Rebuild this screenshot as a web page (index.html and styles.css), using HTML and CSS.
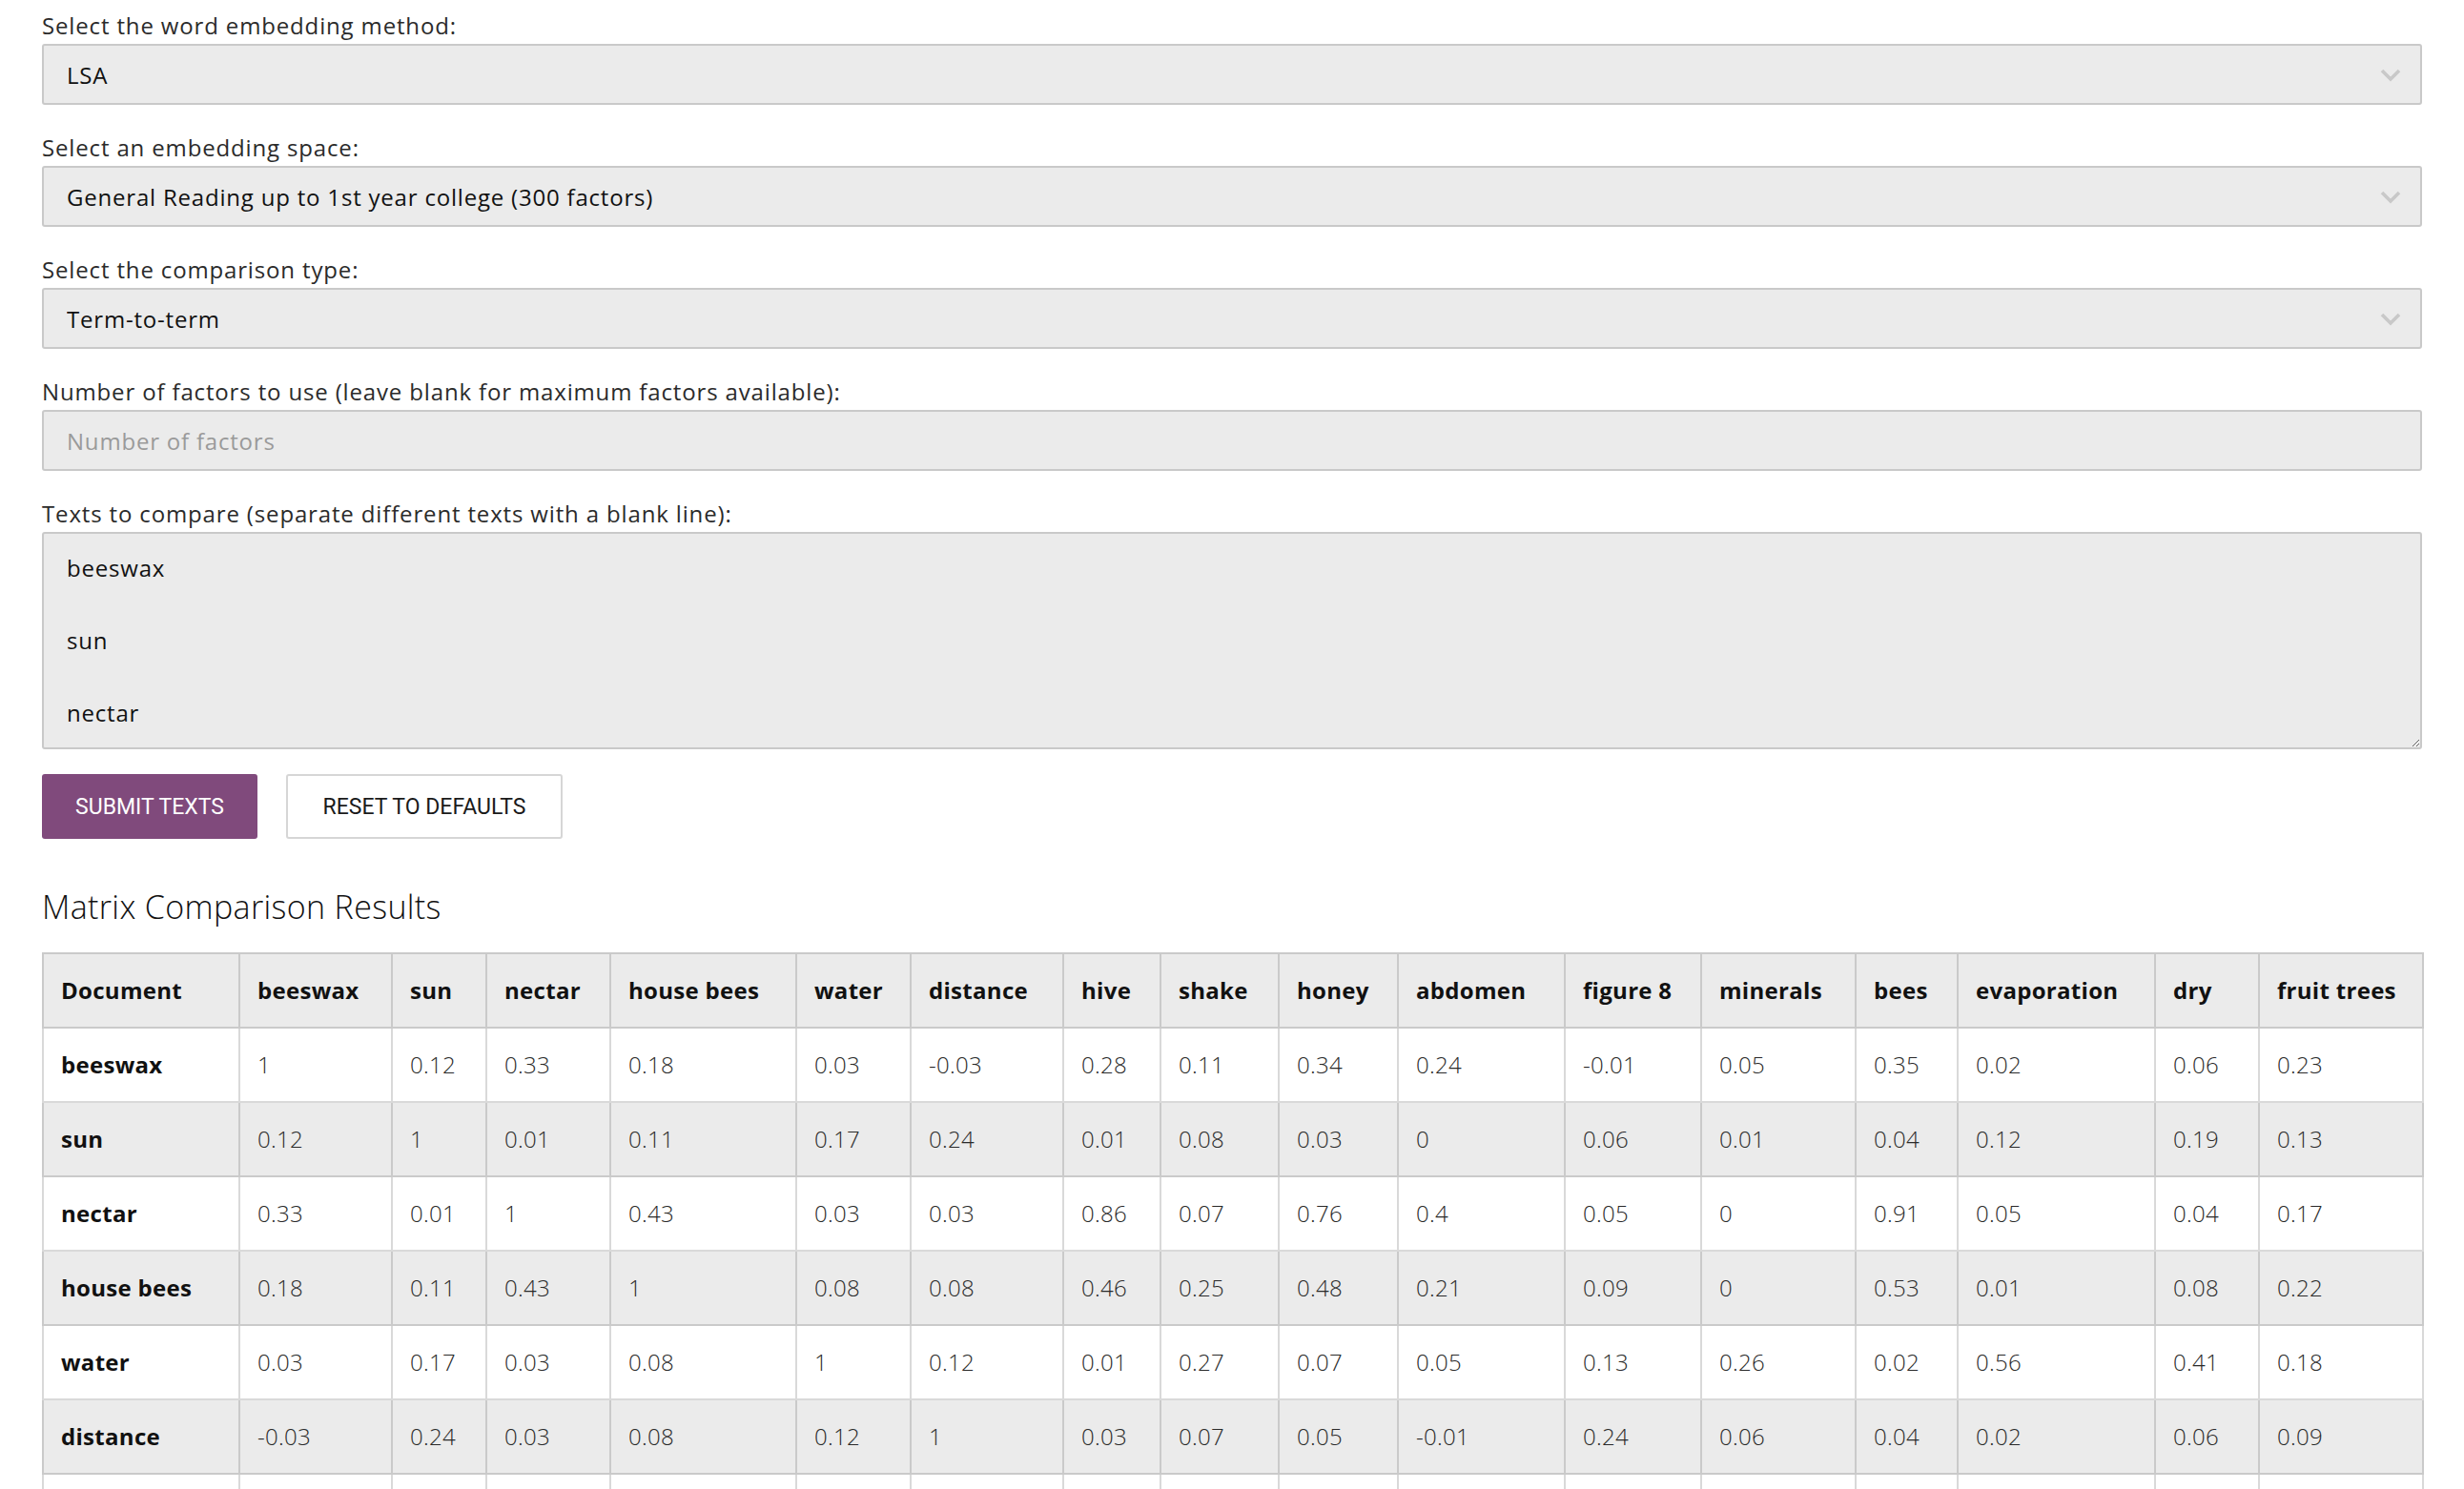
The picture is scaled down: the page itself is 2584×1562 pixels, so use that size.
FILE: index.html
```html
<!DOCTYPE html>
<html lang="en">
<head>
<meta charset="utf-8">
<title>Matrix Comparison</title>
<link rel="stylesheet" href="styles.css">
</head>
<body>
<main class="page">
  <form class="form">
    <div class="field">
      <label class="label" for="method">Select the word embedding method:</label>
      <div class="select-wrap">
        <select id="method" class="control select"><option>LSA</option></select>
        <svg class="chevron" width="22" height="14" viewBox="0 0 22 14"><path d="M2 2 L11 11 L20 2" fill="none" stroke="#c8c8c8" stroke-width="3.6"/></svg>
      </div>
    </div>
    <div class="field">
      <label class="label" for="space">Select an embedding space:</label>
      <div class="select-wrap">
        <select id="space" class="control select"><option>General Reading up to 1st year college (300 factors)</option></select>
        <svg class="chevron" width="22" height="14" viewBox="0 0 22 14"><path d="M2 2 L11 11 L20 2" fill="none" stroke="#c8c8c8" stroke-width="3.6"/></svg>
      </div>
    </div>
    <div class="field">
      <label class="label" for="ctype">Select the comparison type:</label>
      <div class="select-wrap">
        <select id="ctype" class="control select"><option>Term-to-term</option></select>
        <svg class="chevron" width="22" height="14" viewBox="0 0 22 14"><path d="M2 2 L11 11 L20 2" fill="none" stroke="#c8c8c8" stroke-width="3.6"/></svg>
      </div>
    </div>
    <div class="field">
      <label class="label" for="factors">Number of factors to use (leave blank for maximum factors available):</label>
      <input id="factors" class="control input" type="text" placeholder="Number of factors">
    </div>
    <div class="field">
      <label class="label" for="texts">Texts to compare (separate different texts with a blank line):</label>
      <textarea id="texts" class="control textarea">beeswax

sun

nectar</textarea>
    </div>
    <div class="buttons">
      <button type="button" class="btn btn-primary">SUBMIT TEXTS</button>
      <button type="button" class="btn btn-secondary">RESET TO DEFAULTS</button>
    </div>
  </form>

  <h2 class="results-title">Matrix Comparison Results</h2>

  <table class="matrix">
    <colgroup>
      <col class="w1"><col class="w2"><col class="w3"><col class="w4"><col class="w5"><col class="w6"><col class="w7"><col class="w8"><col class="w9"><col class="w10"><col class="w11"><col class="w12"><col class="w13"><col class="w14"><col class="w15"><col class="w16"><col class="w17">
    </colgroup>
    <thead>
      <tr><th>Document</th><th>beeswax</th><th>sun</th><th>nectar</th><th>house bees</th><th>water</th><th>distance</th><th>hive</th><th>shake</th><th>honey</th><th>abdomen</th><th>figure 8</th><th>minerals</th><th>bees</th><th>evaporation</th><th>dry</th><th>fruit trees</th></tr>
    </thead>
    <tbody>
      <tr><th>beeswax</th><td>1</td><td>0.12</td><td>0.33</td><td>0.18</td><td>0.03</td><td>-0.03</td><td>0.28</td><td>0.11</td><td>0.34</td><td>0.24</td><td>-0.01</td><td>0.05</td><td>0.35</td><td>0.02</td><td>0.06</td><td>0.23</td></tr>
      <tr><th>sun</th><td>0.12</td><td>1</td><td>0.01</td><td>0.11</td><td>0.17</td><td>0.24</td><td>0.01</td><td>0.08</td><td>0.03</td><td>0</td><td>0.06</td><td>0.01</td><td>0.04</td><td>0.12</td><td>0.19</td><td>0.13</td></tr>
      <tr><th>nectar</th><td>0.33</td><td>0.01</td><td>1</td><td>0.43</td><td>0.03</td><td>0.03</td><td>0.86</td><td>0.07</td><td>0.76</td><td>0.4</td><td>0.05</td><td>0</td><td>0.91</td><td>0.05</td><td>0.04</td><td>0.17</td></tr>
      <tr><th>house bees</th><td>0.18</td><td>0.11</td><td>0.43</td><td>1</td><td>0.08</td><td>0.08</td><td>0.46</td><td>0.25</td><td>0.48</td><td>0.21</td><td>0.09</td><td>0</td><td>0.53</td><td>0.01</td><td>0.08</td><td>0.22</td></tr>
      <tr><th>water</th><td>0.03</td><td>0.17</td><td>0.03</td><td>0.08</td><td>1</td><td>0.12</td><td>0.01</td><td>0.27</td><td>0.07</td><td>0.05</td><td>0.13</td><td>0.26</td><td>0.02</td><td>0.56</td><td>0.41</td><td>0.18</td></tr>
      <tr><th>distance</th><td>-0.03</td><td>0.24</td><td>0.03</td><td>0.08</td><td>0.12</td><td>1</td><td>0.03</td><td>0.07</td><td>0.05</td><td>-0.01</td><td>0.24</td><td>0.06</td><td>0.04</td><td>0.02</td><td>0.06</td><td>0.09</td></tr>
      <tr><th>hive</th><td>0.28</td><td>0.01</td><td>0.86</td><td>0.46</td><td>0.01</td><td>0.03</td><td>1</td><td></td><td></td><td></td><td></td><td></td><td></td><td></td><td></td><td></td></tr>
    </tbody>
  </table>
</main>
</body>
</html>
```

FILE: styles.css
```css
* { box-sizing: border-box; }

html, body {
  margin: 0;
  padding: 0;
  background: #ffffff;
}

body {
  font-family: "Open Sans", "Liberation Sans", sans-serif;
  color: #222222;
}

.page {
  padding: 9px 44px 0 44px;
}

.form {
  display: flex;
  flex-direction: column;
}

.field {
  display: flex;
  flex-direction: column;
  gap: 1px;
  margin-bottom: 27px;
}

.label {
  display: block;
  font-size: 24px;
  line-height: 36px;
  letter-spacing: 0.85px;
  color: #2b2b2b;
  font-weight: 400;
}

.select-wrap {
  position: relative;
}

.control {
  display: block;
  width: 100%;
  font-family: "Open Sans", "Liberation Sans", sans-serif;
  font-size: 24px;
  letter-spacing: 0.8px;
  color: #111111;
  background: #ebebeb;
  border: 2px solid #c9c9c9;
  border-radius: 3px;
  outline: none;
  margin: 0;
}

.select,
.input {
  height: 64px;
  padding: 0 60px 0 24px;
  -webkit-appearance: none;
  appearance: none;
}

.input::placeholder {
  color: #9a9a9a;
}

.chevron {
  position: absolute;
  right: 22px;
  top: 26px;
  pointer-events: none;
}

.textarea {
  height: 228px;
  padding: 17px 24px 16px 24px;
  line-height: 38px;
  resize: vertical;
}

.buttons {
  display: flex;
  gap: 30px;
  margin-top: -1px;
}

.btn {
  font-family: Roboto, "Liberation Sans", sans-serif;
  font-size: 23px;
  height: 68px;
  border-radius: 3px;
  letter-spacing: 0;
}

.btn-primary {
  width: 226px;
  background: #804a7c;
  color: #ffffff;
  border: none;
}

.btn-secondary {
  width: 290px;
  background: #ffffff;
  color: #1a1a1a;
  border: 2px solid #d6d6d6;
}

.results-title {
  font-size: 34px;
  line-height: 50px;
  font-weight: 300;
  letter-spacing: 0.35px;
  color: #111111;
  margin: 46px 0 23px 0;
}

.matrix {
  width: 100%;
  table-layout: fixed;
  border-collapse: collapse;
  font-size: 24px;
  letter-spacing: 0.3px;
}

.matrix th,
.matrix td {
  height: 78px;
  padding: 0 18px;
  text-align: left;
  border: 2px solid #d9d9d9;
  line-height: 36px;
  white-space: nowrap;
  overflow: hidden;
}

.matrix thead th {
  background: #ebebeb;
  border-color: #cacaca;
  font-weight: 700;
  color: #111111;
}

.matrix tbody th {
  font-weight: 700;
  color: #111111;
}

.matrix td {
  font-weight: 300;
  color: #2a2a2a;
}

.matrix tbody tr:nth-child(even) th,
.matrix tbody tr:nth-child(even) td {
  background: #ebebeb;
  border-color: #cacaca;
}

.matrix tbody tr {
  border-top: 2px solid #cacaca;
}

.w1 { width: 206px; }
.w2 { width: 160px; }
.w3 { width: 99px; }
.w4 { width: 130px; }
.w5 { width: 195px; }
.w6 { width: 120px; }
.w7 { width: 160px; }
.w8 { width: 102px; }
.w9 { width: 124px; }
.w10 { width: 125px; }
.w11 { width: 175px; }
.w12 { width: 143px; }
.w13 { width: 162px; }
.w14 { width: 107px; }
.w15 { width: 207px; }
.w16 { width: 109px; }
.w17 { width: 172px; }
```
